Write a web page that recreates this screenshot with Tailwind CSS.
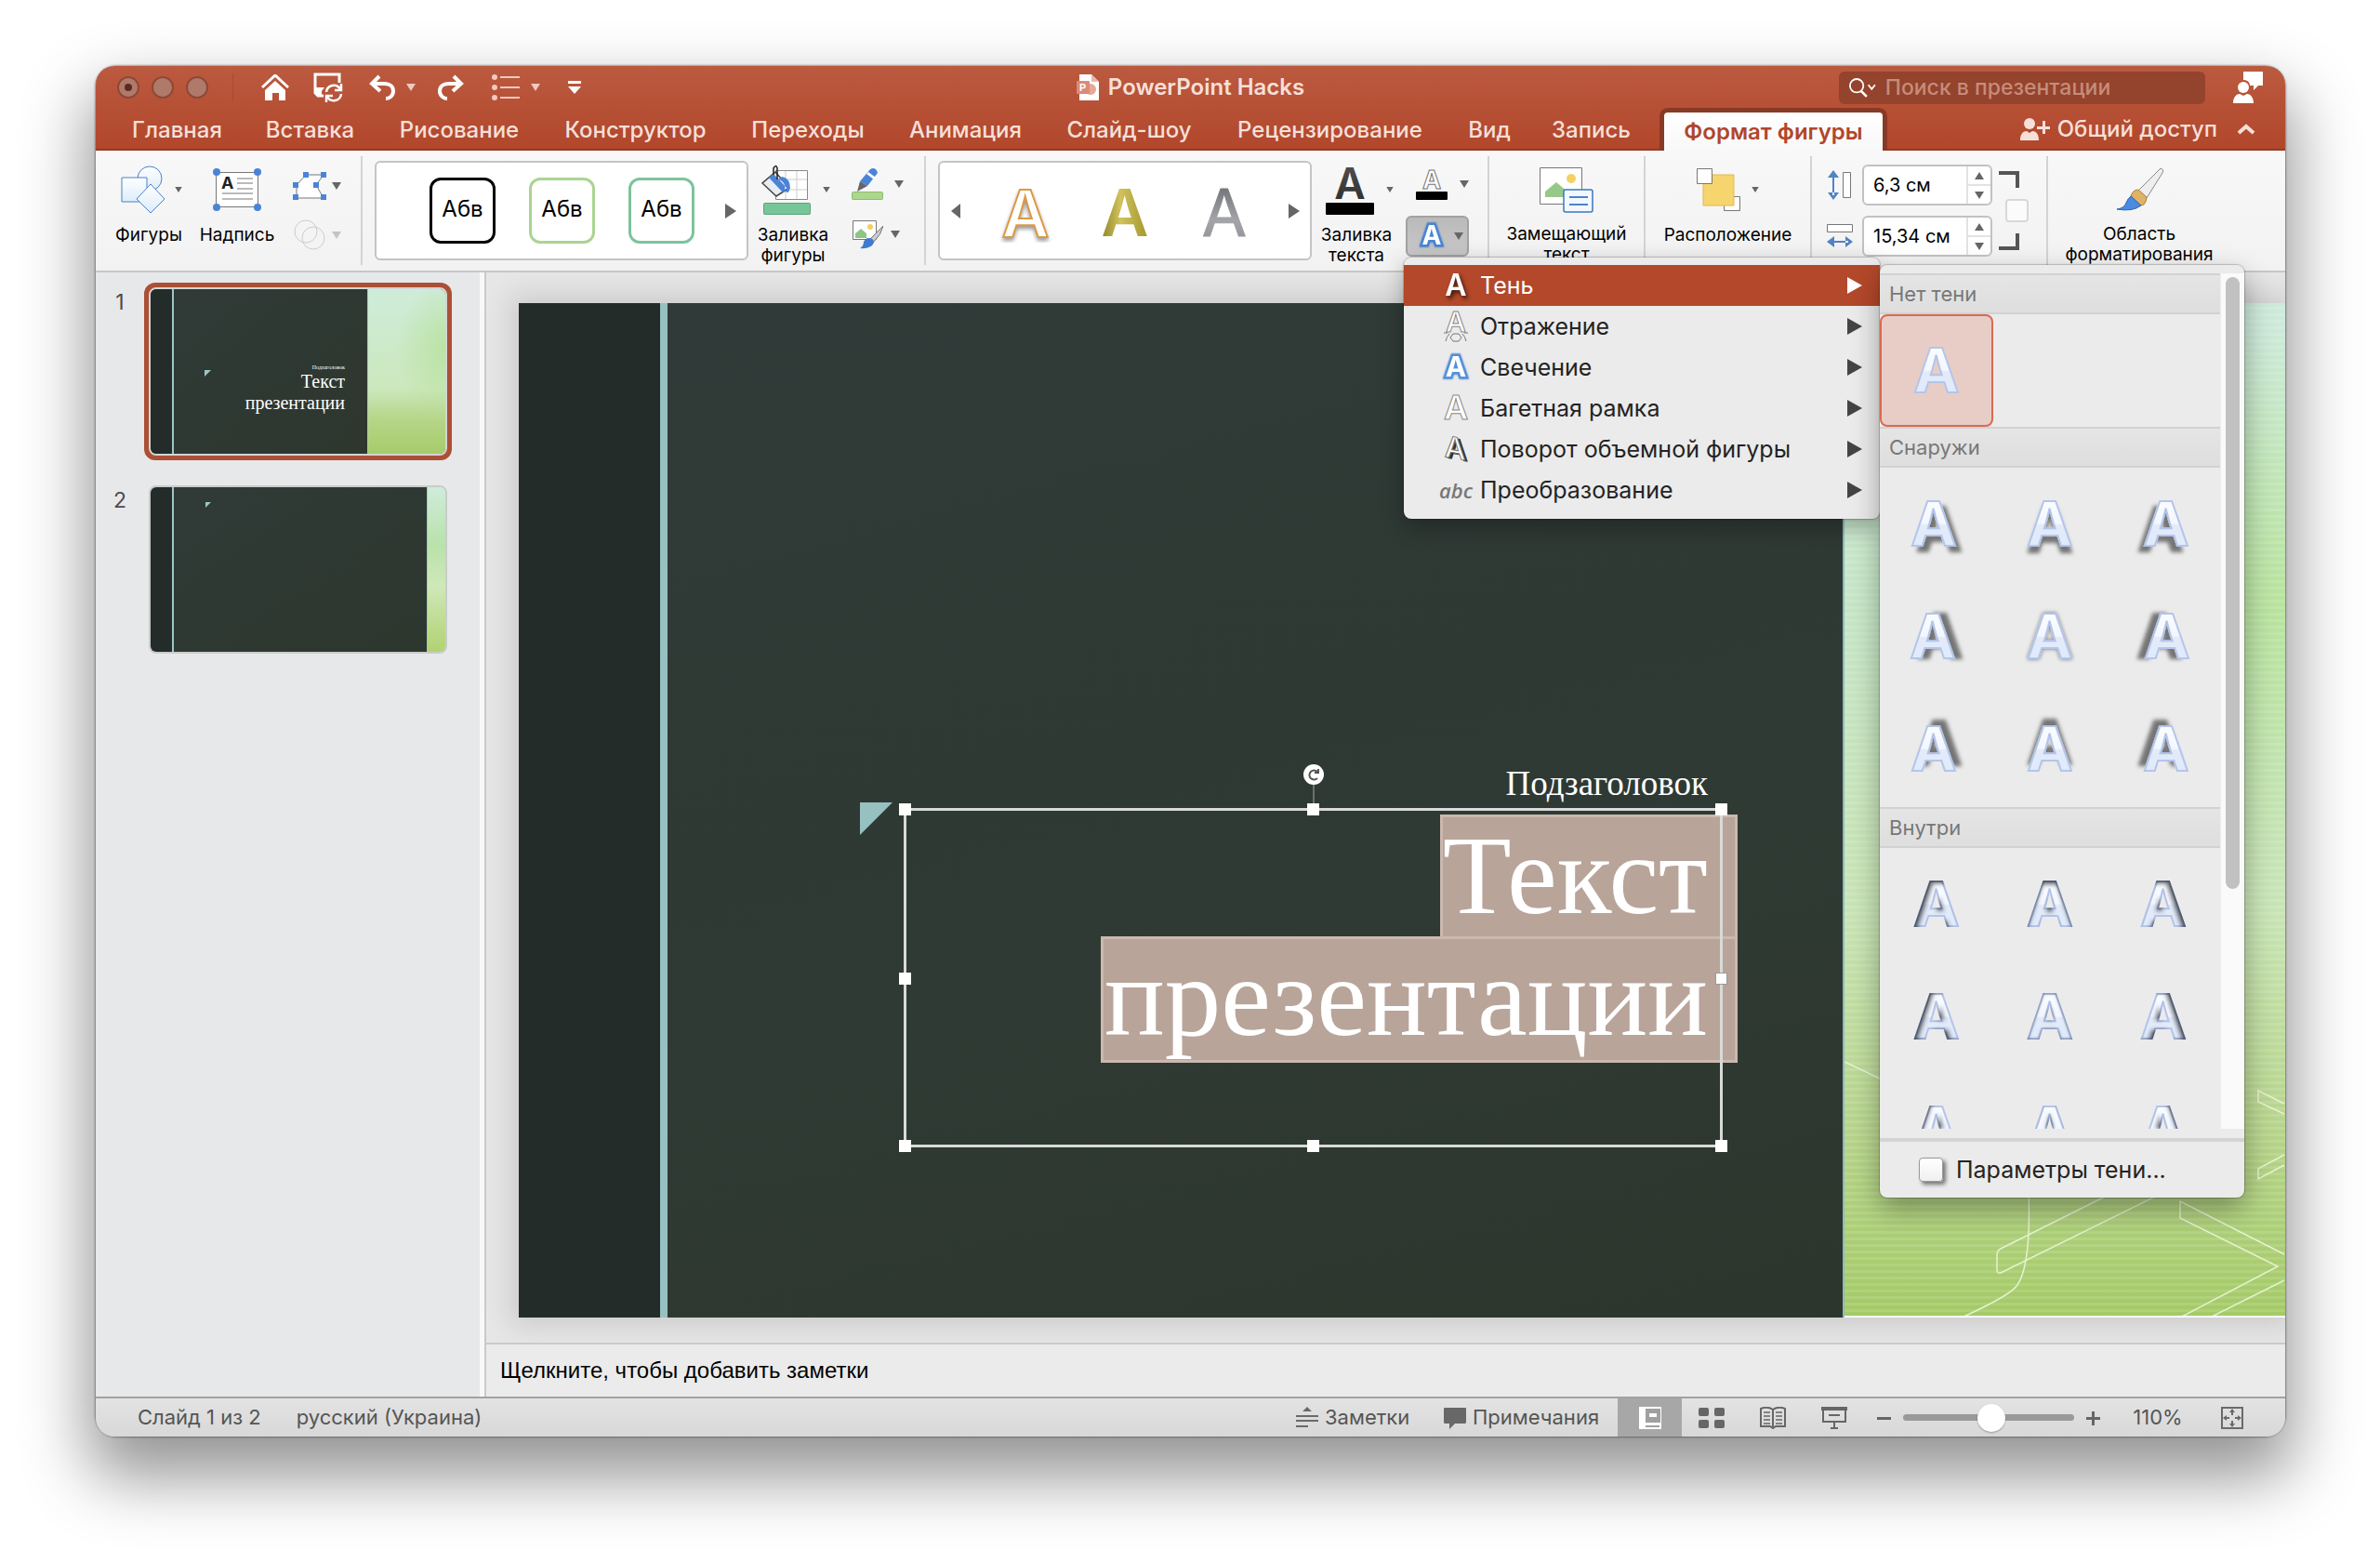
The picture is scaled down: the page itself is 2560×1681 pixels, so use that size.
<!DOCTYPE html>
<html lang="ru">
<head>
<meta charset="utf-8">
<meta name="viewport" content="width=device-width, initial-scale=1">
<title>PowerPoint Hacks</title>
<script src="https://cdn.jsdelivr.net/npm/@tailwindcss/browser@4"></script>
</head>
<body class="bg-white font-['Inter','Noto_Sans',sans-serif] text-black">
<svg class="absolute size-0" aria-hidden="true">
  <defs>
    <linearGradient id="blueFill" x1="0" y1="0" x2="0" y2="1"><stop offset="0" stop-color="#fff"/><stop offset="1" stop-color="#dcecf9"/></linearGradient>
    <linearGradient id="steel" x1="0" y1="0" x2="0" y2="1"><stop offset="0" stop-color="#5f6168"/><stop offset=".6" stop-color="#a3a4a8"/><stop offset="1" stop-color="#8c8d92"/></linearGradient>
    <linearGradient id="gold" x1="0" y1="0" x2="1" y2="0"><stop offset="0" stop-color="#8f8426"/><stop offset=".4" stop-color="#d1c25c"/><stop offset="1" stop-color="#a3962f"/></linearGradient>
    <linearGradient id="ink" x1="0" y1="0" x2="0" y2="1"><stop offset="0" stop-color="#555"/><stop offset="1" stop-color="#2a2a2a"/></linearGradient>
    <linearGradient id="ice" x1="0" y1="0" x2="0" y2="1"><stop offset="0" stop-color="#fff"/><stop offset=".5" stop-color="#f3f7fe"/><stop offset=".52" stop-color="#e3ebfa"/><stop offset="1" stop-color="#dfe9fb"/></linearGradient>
    <symbol id="down" viewBox="0 0 10 8"><path d="M0 0h10L5 8z" fill="currentColor"/></symbol>
    <symbol id="right" viewBox="0 0 16 18"><path d="M0 0v18l16-9z" fill="currentColor"/></symbol>
  </defs>
</svg>

<div class="flex h-screen min-h-[1100px] min-w-[2440px] pt-[71px] pr-[102px] pb-[136px] pl-[103px]">
<div class="relative flex flex-1 flex-col rounded-[22px] shadow-[0_0_2px_1px_rgba(0,0,0,0.35),0_36px_70px_8px_rgba(0,0,0,0.42)]">

  <header class="flex flex-col overflow-hidden rounded-t-[20px] bg-linear-to-b from-[#bb5a40] to-[#b1462a] text-[#f6dfd8] shadow-[inset_0_-2px_0_#933c24]">
    <div class="grid h-[46px] grid-cols-[1fr_auto_1fr] items-center">
      <div class="flex items-center">
        <div class="ml-[23px] flex gap-[13px]">
          <button aria-label="Закрыть" class="flex size-6 items-center justify-center rounded-full border-2 border-[#8e4836] bg-[#b07a6a]"><span class="size-2 rounded-full bg-[#5a2c20]"></span></button>
          <button aria-label="Свернуть" class="size-6 rounded-full border-2 border-[#8e4836] bg-[#b07a6a]"></button>
          <button aria-label="Развернуть" class="size-6 rounded-full border-2 border-[#8e4836] bg-[#b07a6a]"></button>
        </div>
        <div class="ml-[26px] h-[30px] w-px bg-[#a54d36]"></div>
        <div class="ml-[30px] flex items-center text-white">
          <button aria-label="Главный экран"><svg class="h-7 w-[30px]" viewBox="0 0 30 28"><path d="M1 14L15 1l14 13" fill="none" stroke="currentColor" stroke-width="3"/><path d="M4 17L15 7l11 10v11h-7v-8h-7v8H4z" fill="currentColor"/></svg></button>
          <button aria-label="Сохранить" class="ml-[26px]"><svg class="h-8 w-[32px]" viewBox="0 0 32 32"><path d="M11 25H5l-3-3V2h26v9" fill="none" stroke="currentColor" stroke-width="3"/><path d="M2 16h10l-3 4v6H6l-4-4z" fill="currentColor"/><path d="M14 21a8 8 0 0 1 15-3M30 12v7h-7M30 23a8 8 0 0 1-15 3M14 32v-7h7" fill="none" stroke="currentColor" stroke-width="2.500"/></svg></button>
          <button aria-label="Отменить" class="ml-7"><svg class="h-7 w-7" viewBox="0 0 28 28"><path d="M11 2L3 10l9 8M4 10h13c5 0 9 3 9 8s-4 8-8 8" fill="none" stroke="currentColor" stroke-width="4"/></svg></button>
          <button aria-label="Список отмены" class="ml-3"><svg class="h-2 w-2.5 text-[#f0c9bd]"><use href="#down"/></svg></button>
          <button aria-label="Повторить" class="ml-6"><svg class="h-7 w-7" viewBox="0 0 28 28"><path d="M17 2l8 8-9 8M24 10H11c-5 0-9 3-9 8s4 8 8 8" fill="none" stroke="currentColor" stroke-width="4"/></svg></button>
          <button aria-label="Маркеры" class="ml-[30px]"><svg class="h-[30px] w-[30px] text-[#f0c9bd]" viewBox="0 0 30 30"><g fill="currentColor"><circle cx="3" cy="4" r="3"/><circle cx="3" cy="15" r="3"/><circle cx="3" cy="26" r="3"/><path d="M9 3h21v2H9zM9 14h21v2H9zM9 25h21v2H9z"/></g></svg></button>
          <button aria-label="Список маркеров" class="ml-3"><svg class="h-2 w-2.5 text-[#f0c9bd]"><use href="#down"/></svg></button>
          <button aria-label="Настроить панель" class="ml-[30px]"><svg class="h-3.5 w-3.5" viewBox="0 0 14 14"><path d="M0 0h14v3H0zM0 6h14l-7 8z" fill="currentColor"/></svg></button>
        </div>
      </div>
      <h1 class="flex items-center gap-2.5 text-[24px] font-semibold">
        <svg class="h-7 w-6" viewBox="0 0 24 28" aria-hidden="true"><path d="M3 0h13l8 8v20H3z" fill="#fff"/><path d="M16 0v8h8z" fill="#e3b9ad"/><circle cx="15" cy="16" r="6" fill="#e8a796"/><rect y="7" width="14" height="14" rx="1" fill="#d98b78"/><text x="3" y="18" font-size="11" font-weight="700" fill="#fff">P</text></svg>
        PowerPoint Hacks
      </h1>
      <div class="flex items-center justify-end gap-[30px] pr-6">
        <label class="flex h-[35px] w-[394px] items-center rounded-md bg-[#94432d] pl-[11px]">
          <svg class="h-6 w-8" viewBox="0 0 32 24" fill="none" stroke="#fff" stroke-width="2"><circle cx="9" cy="10" r="8"/><path d="M14 16l7 7" stroke-width="3"/><path d="M23 9l4 5 4-5"/></svg>
          <input type="search" aria-label="Поиск в презентации" placeholder="Поиск в презентации" class="ml-2.5 w-full bg-transparent text-[23px] font-medium outline-none placeholder:text-[#c78c7b]">
        </label>
        <button aria-label="Отзыв"><svg class="h-[34px] w-8" viewBox="0 0 32 34" fill="#fff"><path d="M11 0h21v15h-5l-5 5v-5h-4c0-4-3-6-7-6z"/><circle cx="11" cy="17" r="6"/><path d="M0 34c0-7 4-10 7-10l4 2 4-2c3 0 7 3 7 10z"/></svg></button>
      </div>
    </div>
    <div class="flex h-[45px] items-end pl-4">
      <nav aria-label="Лента" class="flex text-[24px] leading-[45px] font-medium">
        <button class="w-[143px]">Главная</button>
        <button class="w-[143px]">Вставка</button>
        <button class="w-[178px]">Рисование</button>
        <button class="w-[201px]">Конструктор</button>
        <button class="w-[170px]">Переходы</button>
        <button class="w-[169px]">Анимация</button>
        <button class="w-[183px]">Слайд-шоу</button>
        <button class="w-[249px]">Рецензирование</button>
        <button class="w-[94px]">Вид</button>
        <button class="w-[125px]">Запись</button>
        <button class="mt-1 ml-4 h-[41px] w-[235px] rounded-t-sm bg-linear-to-b from-white to-[#f8f8f8] leading-[37px] font-semibold text-[#b1462a] shadow-[0_0_0_5px_#883a26]">Формат фигуры</button>
      </nav>
      <div class="ml-auto flex h-[41px] items-center pr-8 pb-1.5">
        <button class="flex items-center gap-2 text-[24px] font-medium"><svg class="h-6 w-8" viewBox="0 0 32 24" fill="currentColor" aria-hidden="true"><circle cx="10" cy="6" r="6"/><path d="M0 24c0-7 3-10 7-10l3 2 3-2c4 0 7 3 7 10z"/><path d="M18 9h14v3H18zM24 3h3v14h-3z"/></svg>Общий доступ</button>
        <button aria-label="Свернуть ленту" class="ml-[21px]"><svg class="h-3 w-5" viewBox="0 0 20 12"><path d="M2 10l8-7 8 7" fill="none" stroke="currentColor" stroke-width="4"/></svg></button>
      </div>
    </div>
  </header>

  <section aria-label="Формат фигуры" class="relative z-10 flex h-[131px] border-b-2 border-[#c6c7c8] bg-linear-to-b from-[#f8f8f8] to-[#f2f2f2] text-[19px] leading-[22px] text-black">
    <div class="flex w-[287px] py-1.5">
      <div class="flex flex-1 border-r-2 border-[#d3d3d3]">
        <button class="ml-2.5 flex w-[94px] flex-col items-center pt-2">
          <span class="flex h-14 items-center gap-2.5 pl-1.5">
            <svg class="h-[52px] w-12" viewBox="0 0 48 52" fill="url(#blueFill)" stroke="#4a80c8" stroke-width="1"><circle cx="31" cy="14" r="13"/><path d="M1 13h27v26H1z"/><path d="M32 20l15 16-15 15-15-15z"/></svg>
            <svg class="h-1.5 w-2 text-[#666]"><use href="#down"/></svg>
          </span>
          <span class="mt-2.5">Фигуры</span>
        </button>
        <button class="ml-0.5 flex w-[92px] flex-col items-center pt-2">
          <span class="flex h-14 items-center">
            <svg class="h-[46px] w-[52px]" viewBox="0 0 52 46"><path d="M3.500 4.500h45v37h-45z" fill="#fff" stroke="#777"/><g fill="#4a84d8"><circle cx="4" cy="4" r="4"/><circle cx="48" cy="4" r="4"/><circle cx="4" cy="42" r="4"/><circle cx="48" cy="42" r="4"/></g><text x="9" y="22" font-size="18" font-weight="700" fill="#222">A</text><path d="M26 11h17M26 16h17M26 22h17M10 27h33M10 33h33" stroke="#bbb" stroke-width="2"/></svg>
          </span>
          <span class="mt-2.5">Надпись</span>
        </button>
        <div class="ml-3.5 flex flex-col gap-5 pt-4">
          <button aria-label="Изменить узлы" class="flex items-center gap-1.5"><svg class="h-8 w-9" viewBox="0 0 36 32"><path d="M14 4h19l-8 11 8 14H4V15z" fill="#fff" stroke="#777"/><g fill="#4a84d8"><path d="M11 1h6v6h-6zM30 1h6v6h-6zM0 12h6v6H0zM22 12h6v6h-6zM0 25h6v6H0zM30 25h6v6h-6z"/></g></svg><svg class="h-2 w-2.5 text-[#666]"><use href="#down"/></svg></button>
          <button aria-label="Объединить фигуры" disabled class="flex items-center gap-1.5"><svg class="h-[34px] w-9" viewBox="0 0 36 34" fill="none" stroke="#ccc"><circle cx="14" cy="13" r="12"/><circle cx="22" cy="20" r="12"/></svg><svg class="h-2 w-2.5 text-[#c4c4c4]"><use href="#down"/></svg></button>
        </div>
      </div>
    </div>

    <div class="flex w-[606px] py-1.5">
      <div class="flex flex-1 border-r-2 border-[#d3d3d3] pl-[13px]">
        <div class="mt-[5px] flex h-[107px] w-[402px] items-center rounded-md border-2 border-[#c4c4c4] bg-white pl-[57px]">
          <div class="flex gap-9 text-[24px] leading-8">
            <button class="h-[71px] w-[71px] rounded-xl border-3 border-black pb-1">Абв</button>
            <button class="h-[71px] w-[71px] rounded-xl border-3 border-[#aad492] pb-1">Абв</button>
            <button class="h-[71px] w-[71px] rounded-xl border-3 border-[#7dc39c] pb-1">Абв</button>
          </div>
          <button aria-label="Следующие стили" class="ml-[33px]"><svg class="h-4 w-3 text-[#666]" viewBox="0 0 12 16"><path d="M0 0v16l12-8z" fill="currentColor"/></svg></button>
        </div>
        <button class="ml-1.5 flex w-[84px] flex-col items-center pt-2">
          <span class="flex h-14 items-center gap-3 pl-1.5">
            <svg class="h-14 w-[54px]" viewBox="0 0 54 56"><path d="M15.500 7.500h34v31h-34z" fill="#fff" stroke="#888"/><path d="M26 8v30M38 8v30M16 17h33M16 28h33" stroke="#ccc"/><path d="M15 9l15 17-14 9L1 21z" fill="#e6ecf5" stroke="#444" stroke-width="1.500"/><path d="M8 15l15 16 5-4L13 11zM22 14c10 2 10 12 7 17l-4-1c1-7 0-11-7-13z" fill="#4a84d8"/><path d="M17 17V5q-1-5-4 0v7" fill="none" stroke="#222" stroke-width="1.500"/><rect x="2.500" y="42.500" width="50" height="12" rx="1" fill="#78c598" stroke="#5aa67a"/></svg>
            <svg class="h-1.5 w-2 text-[#666]"><use href="#down"/></svg>
          </span>
          <span class="mt-2.5">Заливка<br>фигуры</span>
        </button>
        <div class="ml-[19px] flex flex-col gap-5 pt-3">
          <button aria-label="Контур фигуры" class="flex items-center gap-3"><svg class="h-9 w-9" viewBox="0 0 36 36"><path d="M22 2q6-3 8 4L19 20l-8-5z" fill="#4a84d8"/><path d="M20 5l8 6-2 2-8-6z" fill="#fff"/><path d="M11 15l8 5-11 6z" fill="#666"/><rect x="2.500" y="26.500" width="33" height="8" rx="1" fill="#add68f" stroke="#8bbf69"/></svg><svg class="h-2 w-2.5 text-[#666]"><use href="#down"/></svg></button>
          <button aria-label="Стили рисунка" class="ml-0.5 flex items-center gap-2"><svg class="h-8 w-[34px]" viewBox="0 0 34 32"><path d="M1.500 1.500h25v20h-25z" fill="#fff" stroke="#777"/><circle cx="20" cy="8" r="3" fill="#f3cf5e"/><path d="M4 20v-5l6-5 6 5v5z" fill="#8ec583"/><path d="M34 7L20 21l4 3q8-8 10-17z" fill="#ccc" stroke="#777"/><path d="M18 20q6 0 6 5-3 7-15 6 4-2 4-7 2-4 5-4z" fill="#3f7ad0"/></svg><svg class="h-2 w-2.5 text-[#666]"><use href="#down"/></svg></button>
        </div>
      </div>
    </div>

    <div class="flex w-[606px] py-1.5">
      <div class="flex flex-1 border-r-2 border-[#d3d3d3] pl-[13px]">
        <div class="mt-[5px] flex h-[107px] w-[402px] items-center justify-between rounded-md border-2 border-[#c4c4c4] bg-white pr-[23px] pl-3">
          <button aria-label="Предыдущие стили WordArt"><svg class="h-4 w-2.5" viewBox="0 0 10 16"><path d="M10 0v16L0 8z" fill="#666"/></svg></button>
          <div class="flex gap-[47px]">
            <button aria-label="Белый с оранжевым контуром"><svg class="h-[68px] w-[60px]" viewBox="0 0 60 68"><text x="30" y="62" text-anchor="middle" font-size="70" font-weight="600" fill="#fff" stroke="#dd9a43" stroke-width="2" class="drop-shadow-[0_3px_2px_rgba(0,0,0,0.4)]">A</text></svg></button>
            <button aria-label="Золотой"><svg class="h-[68px] w-[60px]" viewBox="0 0 60 68"><text x="30" y="61" text-anchor="middle" font-size="70" font-weight="600" fill="url(#gold)">A</text></svg></button>
            <button aria-label="Серый"><svg class="h-[68px] w-[60px]" viewBox="0 0 60 68"><text x="30" y="61" text-anchor="middle" font-size="70" font-weight="400" fill="url(#steel)" stroke="url(#steel)" stroke-width="1">A</text></svg></button>
          </div>
          <button aria-label="Следующие стили WordArt" class="-mr-3"><svg class="h-4 w-3" viewBox="0 0 12 16"><path d="M0 0v16l12-8z" fill="#666"/></svg></button>
        </div>
        <button class="ml-1.5 flex w-[84px] flex-col items-center pt-2">
          <span class="flex h-14 items-center gap-3 pl-1.5">
            <svg class="h-14 w-[54px]" viewBox="0 0 54 56"><text x="27" y="38" text-anchor="middle" font-size="46" font-weight="600" fill="url(#ink)">A</text><rect x="1" y="42" width="52" height="13" rx="1"/></svg>
            <svg class="h-1.5 w-2 text-[#666]"><use href="#down"/></svg>
          </span>
          <span class="mt-2.5">Заливка<br>текста</span>
        </button>
        <div class="ml-[11px] flex flex-col pt-3">
          <button aria-label="Контур текста" class="ml-2.5 flex items-center gap-3"><svg class="h-9 w-9" viewBox="0 0 36 36"><text x="18" y="23" text-anchor="middle" font-size="27" font-weight="700" fill="#fff" stroke="#777" stroke-width="1">A</text><rect x="1" y="26" width="34" height="9" rx="1"/></svg><svg class="h-2 w-2.5 text-[#666]"><use href="#down"/></svg></button>
          <div class="relative mt-4">
            <button aria-label="Текстовые эффекты" aria-expanded="true" class="flex h-11 w-[68px] items-center gap-2 rounded-md border-2 border-[#a2a2a2] bg-linear-to-b from-[#bababa] to-[#c8c8c8] pl-2.5"><svg class="size-8" viewBox="0 0 32 32"><text x="16" y="25" text-anchor="middle" font-size="28" font-weight="700" fill="#fff" stroke="#4a84d0" stroke-width="5" paint-order="stroke" class="drop-shadow-[0_0_1px_#4a84d0]">A</text></svg><svg class="h-2 w-2.5 text-[#666]"><use href="#down"/></svg></button>

            <div class="absolute top-[45px] left-[-2px] h-[281px] w-[512px] rounded-lg bg-[#ebebeb] pt-2 text-[25px] text-[#232323] shadow-[0_0_1px_1px_rgba(0,0,0,0.2),0_8px_24px_rgba(0,0,0,0.3)]">
              <ul role="menu" class="leading-8">
                <li><button role="menuitem" class="flex h-11 w-full items-center bg-[#b3482a] pr-[19px] pl-9 text-white"><svg class="h-9 w-10" viewBox="0 0 40 36"><text x="20" y="29" text-anchor="middle" font-size="32" font-weight="600" fill="#fff" class="drop-shadow-[2px_3px_2px_rgba(0,0,0,0.7)]">A</text></svg><span class="ml-1.5">Тень</span><svg class="ml-auto h-[18px] w-4"><use href="#right"/></svg></button></li>
                <li><button role="menuitem" class="flex h-11 w-full items-center pr-[19px] pl-9"><svg class="h-9 w-10" viewBox="0 0 40 36"><text x="20" y="24" text-anchor="middle" font-size="30" font-weight="600" fill="#fff" stroke="#888" stroke-width="1">A</text><path d="M7 25h4M29 25h4M9 34q1-5 4-8M31 34q-1-5-4-8M14 30l3-4h6l3 4-3 4h-6z" fill="none" stroke="#777"/></svg><span class="ml-1.5">Отражение</span><svg class="ml-auto h-[18px] w-4 text-[#444]"><use href="#right"/></svg></button></li>
                <li><button role="menuitem" class="flex h-11 w-full items-center pr-[19px] pl-9"><svg class="h-9 w-10" viewBox="0 0 40 36"><text x="20" y="28" text-anchor="middle" font-size="30" font-weight="700" fill="#fff" stroke="#5590d8" stroke-width="5" paint-order="stroke" class="drop-shadow-[0_0_1px_#5590d8]">A</text></svg><span class="ml-1.5">Свечение</span><svg class="ml-auto h-[18px] w-4 text-[#444]"><use href="#right"/></svg></button></li>
                <li><button role="menuitem" class="flex h-11 w-full items-center pr-[19px] pl-9"><svg class="h-9 w-10" viewBox="0 0 40 36"><text x="20" y="30" text-anchor="middle" font-size="36" font-weight="600" fill="#fff" stroke="#8a8a8a" stroke-width="1">A</text></svg><span class="ml-1.5">Багетная рамка</span><svg class="ml-auto h-[18px] w-4 text-[#444]"><use href="#right"/></svg></button></li>
                <li><button role="menuitem" class="flex h-11 w-full items-center pr-[19px] pl-9"><svg class="h-9 w-10" viewBox="0 0 40 36"><g transform="skewY(10)"><text x="22" y="26" text-anchor="middle" font-size="32" font-weight="600" fill="#333">A</text><text x="19" y="25" text-anchor="middle" font-size="32" font-weight="500" fill="#fff" stroke="#777" stroke-width="1">A</text></g></svg><span class="ml-1.5">Поворот объемной фигуры</span><svg class="ml-auto h-[18px] w-4 text-[#444]"><use href="#right"/></svg></button></li>
                <li><button role="menuitem" class="flex h-11 w-full items-center pr-[19px] pl-9"><span aria-hidden="true" class="w-10 font-['Open_Sans',sans-serif] text-[22px] font-semibold italic text-[#777]">abc</span><span class="ml-1.5">Преобразование</span><svg class="ml-auto h-[18px] w-4 text-[#444]"><use href="#right"/></svg></button></li>
              </ul>

              <div class="absolute top-2 left-full flex h-[1003px] w-[392px] flex-col rounded-lg bg-[#ebebeb] shadow-[0_0_1px_1px_rgba(0,0,0,0.2),0_12px_30px_rgba(0,0,0,0.35)]">
                <div class="mt-[9px] flex h-[920px] overflow-hidden">
                  <div class="w-[366px] text-[#777]">
                    <h2 class="h-11 border-y-2 border-[#d2d2d2] bg-linear-to-b from-[#e5e5e5] to-[#dedede] pl-2.5 text-[22px] leading-10">Нет тени</h2>
                    <div id="none" class="grid grid-cols-3"></div>
                    <h2 class="h-11 border-y-2 border-[#d2d2d2] bg-linear-to-b from-[#e5e5e5] to-[#dedede] pl-2.5 text-[22px] leading-10">Снаружи</h2>
                    <div id="outer" class="grid grid-cols-3 pb-0.5"></div>
                    <h2 class="h-11 border-y-2 border-[#d2d2d2] bg-linear-to-b from-[#e5e5e5] to-[#dedede] pl-2.5 text-[22px] leading-10">Внутри</h2>
                    <div id="inner" class="grid grid-cols-3"></div>
                  </div>
                  <div class="ml-px w-[25px] bg-[#fafafa] px-[5px] pt-1"><div class="h-[658px] rounded-full bg-[#c1c1c1]"></div></div>
                </div>
                <div class="mt-2.5 h-1 bg-[#d3d3d3]"></div>
                <button class="flex flex-1 items-center gap-3.5 pl-[42px] leading-8"><span class="size-[26px] rounded-sm border border-[#999] bg-linear-to-b from-white to-[#f0f0f0] shadow-[3px_3px_4px_rgba(0,0,0,0.5)]"></span>Параметры тени...</button>
              </div>
            </div>
          </div>
        </div>
      </div>
    </div>

    <div class="flex w-[168px] py-1.5">
      <button class="flex flex-1 flex-col items-center border-r-2 border-[#d3d3d3] pt-2">
        <span class="flex h-14 items-center"><svg class="h-[50px] w-[60px]" viewBox="0 0 60 50"><path d="M1.500 1.500h45v39h-45z" fill="#fff" stroke="#777"/><circle cx="35" cy="13" r="5" fill="#f4d066"/><path d="M7 33v-6l12-10 12 10v6z" fill="#97c88a"/><rect x="27" y="25" width="31" height="24" rx="2" fill="#f2f8fd" stroke="#3b78bd" stroke-width="1.500"/><path d="M33 33h20M33 41h20" stroke="#4a84c8" stroke-width="2"/></svg></span>
        <span class="mt-2.5">Замещающий<br>текст</span>
      </button>
    </div>
    <div class="flex w-[179px] py-1.5">
      <button class="flex flex-1 flex-col items-center border-r-2 border-[#d3d3d3] pt-2">
        <span class="flex h-14 items-center gap-3"><svg class="h-12 w-[47px]" viewBox="0 0 47 48"><path d="M29.500 31.500h17v15h-17z" fill="#fff" stroke="#777"/><path d="M7 8h33v33H7z" fill="#f6d46e" stroke="#e2b94c"/><path d="M.5 1.500h16v16H.5z" fill="#fff" stroke="#777"/></svg><svg class="h-1.5 w-2 text-[#666]"><use href="#down"/></svg></span>
        <span class="mt-2.5">Расположение</span>
      </button>
    </div>
    <div class="flex w-[254px] py-1.5">
      <div class="flex flex-1 border-r-2 border-[#d3d3d3] pt-[9px] pl-4">
        <div class="flex flex-col gap-[11px] text-[20px]">
          <div class="flex h-11 items-center gap-2.5">
            <svg class="h-8 w-7" viewBox="0 0 28 32" aria-hidden="true"><path d="M7 0l6 8H1zM7 32l6-8H1zM6 5h2v22H6z" fill="#5283c4"/><path d="M17.500 2.500h8v27h-8z" fill="#fff" stroke="#777"/></svg>
            <div class="flex h-11 w-[140px] rounded-md border-2 border-[#c2c2c2] bg-white">
              <input aria-label="Высота" value="6,3 см" class="w-[110px] bg-transparent pl-2.5 outline-none">
              <div class="flex flex-1 flex-col divide-y-2 divide-[#e2e2e2] border-l-2 border-[#e2e2e2]"><button aria-label="Увеличить высоту" class="flex flex-1 items-center justify-center"><svg class="h-2 w-2.5 rotate-180 text-[#666]"><use href="#down"/></svg></button><button aria-label="Уменьшить высоту" class="flex flex-1 items-center justify-center"><svg class="h-2 w-2.5 text-[#666]"><use href="#down"/></svg></button></div>
            </div>
          </div>
          <div class="flex h-11 items-center gap-2.5">
            <svg class="h-7 w-7" viewBox="0 0 28 28" aria-hidden="true"><path d="M.5 1.500h27v8H.5z" fill="#fff" stroke="#777"/><path d="M0 20l8-6v12zM28 20l-8-6v12zM5 19h18v2H5z" fill="#5283c4"/></svg>
            <div class="flex h-11 w-[140px] rounded-md border-2 border-[#c2c2c2] bg-white">
              <input aria-label="Ширина" value="15,34 см" class="w-[110px] bg-transparent pl-2.5 outline-none">
              <div class="flex flex-1 flex-col divide-y-2 divide-[#e2e2e2] border-l-2 border-[#e2e2e2]"><button aria-label="Увеличить ширину" class="flex flex-1 items-center justify-center"><svg class="h-2 w-2.5 rotate-180 text-[#666]"><use href="#down"/></svg></button><button aria-label="Уменьшить ширину" class="flex flex-1 items-center justify-center"><svg class="h-2 w-2.5 text-[#666]"><use href="#down"/></svg></button></div>
            </div>
          </div>
        </div>
        <div class="ml-[7px] flex flex-col items-start gap-3 pt-[7px]">
          <div class="h-[18px] w-[22px] border-t-4 border-r-4 border-[#555]"></div>
          <input type="checkbox" aria-label="Сохранять пропорции" class="ml-[7px] size-[25px] appearance-none rounded-sm border-2 border-[#d8d8d8] bg-[#fbfbfb]">
          <div class="h-[18px] w-[22px] border-r-4 border-b-4 border-[#555]"></div>
        </div>
      </div>
    </div>
    <div class="flex py-1.5">
      <button class="flex w-[196px] flex-col items-center pt-2">
        <span class="flex h-14 items-center"><svg class="h-12 w-[54px]" viewBox="0 0 54 48"><path d="M50 1q4 1 2 5L35 33l-9-8z" fill="#eee" stroke="#888"/><path d="M26 24l9 8q-1 9-6 9L18 31q2-7 8-7z" fill="#e0b264" stroke="#a8823c"/><path d="M18 31l11 10q-9 7-26 4 8-1 10-7 2-5 5-7z" fill="#4a8ae0" stroke="#2f66b8"/></svg></span>
        <span class="mt-2.5">Область<br>форматирования</span>
      </button>
    </div>
  </section>

  <main class="flex min-h-0 flex-1">
    <aside aria-label="Слайды" class="w-[413px] bg-[#e7e8ea] pt-[11px] pl-[14px]">
      <ol class="flex flex-col gap-[22px] text-[23px] leading-[26px] text-[#4c4c4e]">
        <li class="flex gap-3.5">
          <span class="w-6 pt-2 text-center">1</span>
          <a href="#slide" aria-label="Слайд 1" class="h-[191px] w-[331px] rounded-xl border-[5px] border-[#ab5036] bg-[#ab5036]">
            <span class="flex h-full overflow-hidden rounded-lg border-2 border-[#d3d5d4]">
              <span class="w-[23px] bg-[#232c29]"></span><span class="w-0.5 bg-[#9bc7c8]"></span>
              <span class="flex flex-1 items-start justify-between bg-linear-to-br from-[#303a37] to-[#2d372e] pr-6 pl-[33px] font-['Liberation_Serif',serif] text-white">
                <svg class="mt-[87px] size-[7px]" viewBox="0 0 7 7"><path d="M0 0h7L0 7z" fill="#9bc7c8"/></svg>
                <span class="flex flex-col pt-20 text-right"><span class="text-[6px] leading-2">Подзаголовок</span><span class="text-[20px] leading-[23px]">Текст<br>презентации</span></span>
              </span>
              <span class="w-[84px] border-l border-[#9bc7c8] bg-[radial-gradient(ellipse_at_100%_35%,rgba(175,222,140,0.6),transparent_45%),linear-gradient(#cfecda,#cbe8bd_60%,#b5d586_80%,#a6cc6a)]"></span>
            </span>
          </a>
        </li>
        <li class="flex gap-3.5">
          <span class="w-6 pt-2 text-center">2</span>
          <a href="#slide" aria-label="Слайд 2" class="h-[191px] w-[331px] border-[5px] border-transparent">
            <span class="flex h-full overflow-hidden rounded-lg border-2 border-[#c9cccb]">
              <span class="w-[23px] bg-[#232c29]"></span><span class="w-0.5 bg-[#9bc7c8]"></span>
              <span class="flex-1 bg-linear-to-br from-[#303a37] to-[#2d372e] pl-[34px]"><svg class="mt-4 size-1.5" viewBox="0 0 7 7"><path d="M0 0h7L0 7z" fill="#9bc7c8"/></svg></span>
              <span class="w-5 border-l border-[#9bc7c8] bg-[linear-gradient(#cfecda,#b9e2ab_35%,#cfe8b8_60%,#b1d272)]"></span>
            </span>
          </a>
        </li>
      </ol>
    </aside>
    <div class="w-[5px] bg-[#f8f8f8]"></div>
    <div class="flex min-w-0 flex-1 flex-col border-l-2 border-[#c9cacb]">
      <div class="flex min-h-0 flex-1 overflow-hidden bg-[#e6e6e6] pt-[33px] pb-[27px] pl-[35px]">
        <div id="slide" class="relative flex flex-1 shadow-[0_0_28px_8px_rgba(0,0,0,0.12)]">
          <div class="w-[152px] bg-[#232c29]"></div>
          <div class="w-2 bg-[#97c0c1]"></div>
          <div class="w-[1264px] bg-[linear-gradient(165deg,#303a38,#2e3933_45%,#2f3a34_60%,#2c362d)]"></div>
          <div class="w-0.5 bg-[#8fb9c0]"></div>
          <div class="relative flex-1 overflow-hidden border-b-2 border-white bg-[repeating-linear-gradient(transparent_0_4px,rgba(255,255,255,0.12)_4px_7px),radial-gradient(ellipse_400px_300px_at_100%_30%,rgba(175,225,130,0.6),transparent),linear-gradient(#cdeadb_0%,#c5e6c6_30%,#c8e4b4_60%,#b6d48a_82%,#a4ca66)]">
            <svg class="absolute top-0 left-0 h-[1091px] w-[474px]" viewBox="1984 326 474 1091" fill="none" stroke="#e6f2d0" stroke-width="1.500"><path d="M1984 1142l40 19M2182 1280q3 80-12 102-7 11-60 35M2280 1279l-128 64q-4 2-4 7v16q0 5 6 2l180-89M2457 1349l-112-57v18l105 52-105 55M2457 1377l-80 40M2457 1187l-28-14v12l28 13M2457 1242l-28 15v11l28-15"/></svg>
          </div>

          <svg class="absolute top-[537px] left-[367px] size-9" viewBox="0 0 36 36"><path d="M0 0h35L0 35z" fill="#97c0c1"/></svg>
          <p class="absolute top-[497px] left-[779px] w-[500px] text-right font-['Liberation_Serif',serif] text-[37px] leading-10 text-white">Подзаголовок</p>
          <div class="absolute top-[550px] left-[991px] h-[132px] w-[320px] border-3 border-b-0 border-[#cbb8ae] bg-[#b8a499]"></div>
          <div class="absolute top-[681px] left-[626px] h-[136px] w-[685px] border-3 border-[#cbb8ae] bg-[#b8a499]"></div>
          <h2 class="absolute top-[550px] left-[579px] w-[700px] text-right font-['Liberation_Serif',serif] text-[121px] leading-[131px] text-white">Текст<br>презентации</h2>
          <div class="absolute top-[543px] left-[414px] h-[365px] w-[881px] border-3 border-[#d8dad9]">
            <svg class="absolute top-[-50px] left-[426px] h-12 w-6" viewBox="0 0 24 48"><path d="M12 20v28" stroke="#aaa"/><circle cx="12" cy="11" r="11" fill="#fff"/><path d="M16 8a5 5 0 1 0 0 7M17 5v4h-4" fill="none" stroke="#555" stroke-width="2"/></svg>
            <span class="absolute -top-2 -left-2 size-[13px] bg-white"></span><span class="absolute -top-2 left-[431px] size-[13px] bg-white"></span><span class="absolute -top-2 -right-2 size-[13px] bg-white"></span>
            <span class="absolute top-[174px] -left-2 size-[13px] bg-white"></span><span class="absolute top-[174px] -right-2 size-[13px] border border-[#999] bg-white"></span>
            <span class="absolute -bottom-2 -left-2 size-[13px] bg-white"></span><span class="absolute -bottom-2 left-[431px] size-[13px] bg-white"></span><span class="absolute -right-2 -bottom-2 size-[13px] bg-white"></span>
          </div>
        </div>
      </div>
      <div class="flex h-[58px] items-center border-t-2 border-[#c9cacb] bg-[#ebebeb]"><input aria-label="Заметки" value="Щелкните, чтобы добавить заметки" class="w-full bg-transparent pl-[15px] font-['Liberation_Sans',sans-serif] text-[24px] outline-none"></div>
    </div>
  </main>

  <footer class="flex h-[43px] items-stretch rounded-b-[20px] border-t-2 border-[#a2a2a2] bg-linear-to-b from-[#e3e3e3] to-[#d8d8d8] text-[22px] text-[#555]">
    <div class="flex flex-1 items-center gap-[38px] pl-[45px]"><span>Слайд 1 из 2</span><button>русский (Украина)</button></div>
    <button class="flex w-[159px] items-center gap-1.5"><svg class="h-6 w-[26px]" viewBox="0 0 26 24" fill="#6a6a6a" aria-hidden="true"><path d="M8 5l5-5 5 5zM1 9h24v2H1zM1 14h24v2H1zM1 20h13v2H1z"/></svg>Заметки</button>
    <button class="flex w-[188px] items-center gap-1.5"><svg class="h-6 w-[26px]" viewBox="0 0 26 24" fill="#686868" aria-hidden="true"><path d="M2 1h22q1 0 1 1v14q0 2-1 2H13l-6 6v-6H2q-1 0-1-2V2q0-1 1-1z"/></svg>Примечания</button>
    <button aria-label="Обычный режим" aria-pressed="true" class="flex w-[69px] items-center justify-center bg-[#a7a7a7]"><svg class="h-6 w-[26px]" viewBox="0 0 26 24"><path d="M1 0h24v24H1z" fill="#fff"/><path d="M8 2h16v15H8zM8 20h15v2H8z" fill="#a0a0a0"/><path d="M12 7h8v4h-8z" fill="#fff"/></svg></button>
    <button aria-label="Сортировщик слайдов" class="ml-[18px] w-7"><svg class="h-6 w-7" viewBox="0 0 28 24" fill="#666"><rect y="1" width="11" height="9" rx="2"/><rect x="17" y="1" width="11" height="9" rx="2"/><rect y="14" width="11" height="9" rx="2"/><rect x="17" y="14" width="11" height="9" rx="2"/></svg></button>
    <button aria-label="Режим чтения" class="ml-[38px] w-7"><svg class="h-6 w-7" viewBox="0 0 28 24" fill="none" stroke="#666" stroke-width="2"><path d="M14 3Q8-1 1 2v19h10l3 2 3-2h10V2q-7-3-13 1v20"/><path d="M4 6h7M4 10h7M4 14h7M4 18h7M17 6h7M17 10h7M17 14h7M17 18h7" stroke-width="1.500"/></svg></button>
    <button aria-label="Показ слайдов" class="ml-[38px] w-7"><svg class="h-6 w-7" viewBox="0 0 28 24" fill="none" stroke="#666" stroke-width="2"><path d="M0 2h28" stroke-width="4"/><path d="M2 3v13h24V3M8 9h12M14 16v6M10 23h8"/></svg></button>
    <div class="ml-8 flex items-center">
      <button aria-label="Уменьшить" class="mr-[13px]"><svg class="h-4 w-[15px]"><path d="M0 7h15v3H0z" fill="#666"/></svg></button>
      <input type="range" min="0" max="100" value="52" aria-label="Масштаб" class="h-[7px] w-[184px] appearance-none rounded-full bg-[#9a9a9a] [&::-webkit-slider-thumb]:size-[30px] [&::-webkit-slider-thumb]:appearance-none [&::-webkit-slider-thumb]:rounded-full [&::-webkit-slider-thumb]:bg-white [&::-webkit-slider-thumb]:shadow-[0_1px_2px_rgba(0,0,0,0.3)]">
      <button aria-label="Увеличить" class="ml-[13px]"><svg class="h-4 w-[15px]"><path d="M0 7h15v3H0zM6 1h3v15H6z" fill="#666"/></svg></button>
    </div>
    <button class="ml-8 w-[60px]">110%</button>
    <button aria-label="Вписать в окно" class="mr-[45px] ml-[38px]"><svg class="size-6" viewBox="0 0 24 24" fill="none" stroke="#6a6a6a"><path d="M1 1h22v22H1z" stroke-width="2"/><path d="M12 3v6M12 15v6M3 12h6M15 12h6" stroke-width="2"/><path d="M12 2l3 4H9zM12 22l3-4H9zM2 12l4-3v6zM22 12l-4-3v6z" fill="#6a6a6a" stroke="none"/></svg></button>
  </footer>
</div>
</div>

<script>
  // Shadow gallery: each cell is a WordArt letter with its shadow offset.
  const cell = (id, label, filter, shiftX, extra) =>
    '<button aria-label="' + label + '" class="flex h-[121px] w-[122px] items-center justify-center ' + extra + '">' +
    '<svg class="size-[100px] overflow-visible" viewBox="0 0 100 100"><defs>' + filter + '</defs>' +
    '<text x="' + (50 + shiftX) + '" y="73" text-anchor="middle" font-size="66" font-weight="700" fill="url(#ice)" stroke="#b3c5ea" stroke-width="2"' +
    (id ? ' filter="url(#' + id + ')"' : '') + '>A</text></svg></button>';

  const outer = [[6, 6], [0, 7], [-6, 6], [8, 0], [0, 0], [-8, 0], [6, -6], [0, -7], [-6, -6]];
  const inner = [[4, 4], [0, 5], [-4, 4], [5, 0], [0, 0], [-5, 0], [4, -4], [0, -5], [-4, -4]];

  document.getElementById('none').innerHTML =
    cell('', 'Нет тени', '', 0, 'rounded-lg border-2 border-[#d96a50] bg-[#e8cdc6]');

  document.getElementById('outer').innerHTML = outer.map(([x, y], i) =>
    cell('o' + i, 'Снаружи ' + (i + 1),
      '<filter id="o' + i + '" x="-30%" y="-30%" width="160%" height="160%"><feDropShadow dx="' + x + '" dy="' + y +
      '" stdDeviation="2" flood-color="#000" flood-opacity=".5"/></filter>', -x / 2, '')).join('');

  document.getElementById('inner').innerHTML = inner.map(([x, y], i) =>
    cell('i' + i, 'Внутри ' + (i + 1),
      '<filter id="i' + i + '" x="-30%" y="-30%" width="160%" height="160%"><feOffset in="SourceAlpha" dx="' + x + '" dy="' + y + '"/>' +
      '<feGaussianBlur stdDeviation="2" result="b"/><feComposite in="SourceAlpha" in2="b" operator="out" result="e"/>' +
      '<feFlood flood-color="#1c2230" flood-opacity=".85"/><feComposite in2="e" operator="in" result="s"/>' +
      '<feMerge><feMergeNode in="SourceGraphic"/><feMergeNode in="s"/></feMerge></filter>', 0, '')).join('');
</script>
</body>
</html>
